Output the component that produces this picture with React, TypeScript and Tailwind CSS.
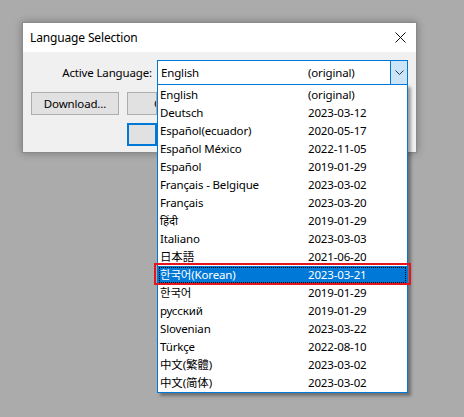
import React from 'react';

const languages: [string, string][] = [
  ['English', '(original)'],
  ['Deutsch', '2023-03-12'],
  ['Español(ecuador)', '2020-05-17'],
  ['Español México', '2022-11-05'],
  ['Español', '2019-01-29'],
  ['Français - Belgique', '2023-03-02'],
  ['Français', '2023-03-20'],
  ['हिंदी', '2019-01-29'],
  ['Italiano', '2023-03-03'],
  ['日本語', '2021-06-20'],
  ['한국어(Korean)', '2023-03-21'],
  ['한국어', '2019-01-29'],
  ['русский', '2019-01-29'],
  ['Slovenian', '2023-03-22'],
  ['Türkçe', '2022-08-10'],
  ['中文(繁體)', '2023-03-02'],
  ['中文(简体)', '2023-03-02'],
];

const SELECTED = 10;

const App = () => {
  return (
    <div
      className="w-[464px] h-[417px] bg-[#ababab] pl-[22px] pt-[22px] overflow-hidden text-[11.5px] tracking-[-0.15px] text-black"
      style={{ fontFamily: '"Noto Sans", "Noto Sans CJK KR", "Noto Sans CJK JP", sans-serif' }}
    >
      {/* Dialog */}
      <div className="w-[395px] h-[131px] border border-[#8a8a8a] bg-[#f0f0f0] shadow-[0_0_8px_rgba(0,0,0,0.3)] flex flex-col">
        {/* Title bar */}
        <div className="h-[29px] bg-white flex items-center justify-between pl-[7px] pr-[10px] shrink-0">
          <span className="text-[12px] leading-none">Language Selection</span>
          <svg width="11" height="11" viewBox="0 0 11 11" className="shrink-0">
            <path d="M0.5 0.5 L10.5 10.5 M10.5 0.5 L0.5 10.5" stroke="#111" strokeWidth="1" fill="none" />
          </svg>
        </div>

        {/* Body */}
        <div className="flex flex-col pt-[8px]">
          {/* Combo row */}
          <div className="flex items-center h-[25px]">
            <span className="w-[129px] text-right">Active Language:</span>
            <div className="relative ml-[5px] w-[251px] h-[25px] border border-[#0078d7] bg-white flex items-center">
              <span className="pl-[3px] w-[150px]">English</span>
              <span className="flex-1">(original)</span>
              <div className="w-[17px] h-[23px] bg-[#cce4f7] border-l border-[#0078d7] flex items-center justify-center">
                <svg width="9" height="5" viewBox="0 0 9 5">
                  <path d="M0.5 0.5 L4.5 4.5 L8.5 0.5" stroke="#333" strokeWidth="1" fill="none" />
                </svg>
              </div>

              {/* Dropdown list */}
              <div className="absolute left-[-1px] top-[23px] w-[251px] pt-[1px] border border-[#0078d7] bg-white shadow-[3px_3px_3px_rgba(0,0,0,0.35)] z-10 flex flex-col">
                {languages.map(([name, date], i) => {
                  const sel = i === SELECTED;
                  return (
                    <div
                      key={name}
                      className={`relative h-[18px] flex items-center ${sel ? 'bg-[#0078d7] text-white' : ''}`}
                    >
                      <span className="pl-[2px] w-[150px] whitespace-nowrap">{name}</span>
                      <span>{date}</span>
                      {sel && (
                        <>
                          <span className="absolute inset-[1px] border border-dotted border-black pointer-events-none" />
                          <span className="absolute -left-[4px] -right-[4px] -top-[3px] -bottom-[1px] border-2 border-[#e3161d] pointer-events-none" />
                        </>
                      )}
                    </div>
                  );
                })}
              </div>
            </div>
          </div>

          {/* Buttons (partly hidden under the open list) */}
          <div className="flex gap-[8px] pl-[8px] mt-[7px]">
            <button className="w-[88px] h-[23px] bg-[#e1e1e1] border border-[#adadad]">Download...</button>
            <button className="w-[30px] h-[23px] bg-[#e1e1e1] border border-[#adadad] pl-[26px] overflow-hidden text-left whitespace-nowrap">C</button>
          </div>
          <div className="pl-[104px] mt-[8px]">
            <button className="w-[30px] h-[23px] bg-[#e1e1e1] border-2 border-[#0078d7]"></button>
          </div>
        </div>
      </div>
    </div>
  );
};

export default App;
